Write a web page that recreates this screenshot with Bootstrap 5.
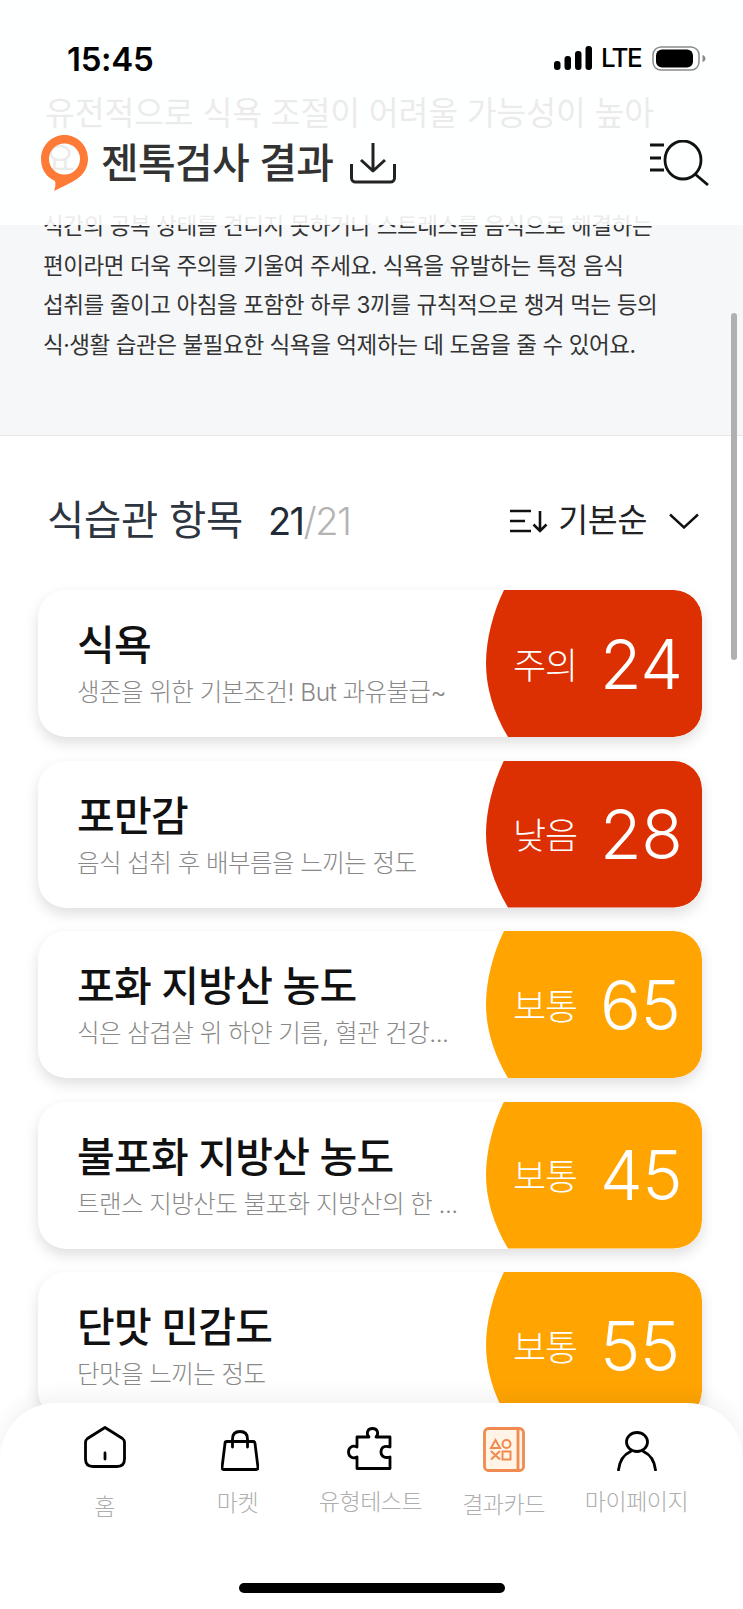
<!DOCTYPE html>
<html lang="ko">
<head>
  <meta charset="UTF-8">
  <title>젠톡검사 결과</title>
  <link href="https://cdn.jsdelivr.net/npm/bootstrap@5.3.3/dist/css/bootstrap.min.css" rel="stylesheet">
  <style>
    html, body { margin: 0; background: #fff; }
    body { font-family: Inter, "Noto Sans CJK KR", sans-serif; }
    .app-screen { width: 743px; height: 1609px; overflow: hidden; position: relative; background: #fff; }

    /* top overlay */
    .top-bar { position: absolute; top: 0; left: 0; right: 0; height: 225px; background: rgba(255,255,255,.9); }
    .status-row { height: 117px; padding: 40px 37px 0 67px; align-items: flex-start; }
    .clock { font-size: 33px; font-weight: 600; color: #000; line-height: 38px; letter-spacing: -.3px; }
    .lte-text { font-size: 26px; line-height: 36px; font-weight: 500; color: #000; margin: 0 11px 0 9px; letter-spacing: -1.6px; }
    .title-row { padding: 18px 34px 0 41px; }
    .title-text { font-size: 41px; font-weight: 500; color: #333; line-height: 48px; margin: 0 17px 0 13px; letter-spacing: -.7px; white-space: nowrap; }

    /* gray summary */
    .summary-box { background: #f6f7f9; height: 436px; padding: 91px 43px 0 45px; border-bottom: 1px solid #e6e7e9; }
    .summary-head { font-size: 32.5px; line-height: 46px; color: #333; margin: 0 0 23px; font-weight: 400; letter-spacing: -.2px; }
    .summary-text { font-size: 22.5px; line-height: 39.6px; color: #333; margin: 0 0 0 -2px; letter-spacing: -.42px; white-space: nowrap; }

    /* list */
    .list-head { padding: 60px 44px 0 47px; height: 154px; align-items: flex-start; }
    .list-title { font-size: 40.5px; line-height: 50px; color: #2c3540; letter-spacing: -.3px; margin: 0; font-weight: 400; }
    .list-count { font-size: 38px; line-height: 50px; margin-left: 25px; color: #222b35; font-weight: 400; letter-spacing: -1.5px; }
    .list-count span { color: #b4b4b4; font-weight: 300; }
    .sort-text { font-size: 32.5px; line-height: 50px; color: #222; margin: 0 22px 0 9px; letter-spacing: -.3px; white-space: nowrap; }

    .score-list { padding: 0 41px 0 38px; gap: 23.5px; }
    .score-item { height: 147px; border-radius: 28px; background: #fff; box-shadow: 0 6px 14px rgba(0,0,0,.13); overflow: hidden; flex: none; }
    .item-body { padding: 29px 0 0 39px; min-width: 0; }
    .item-name { font-size: 41px; font-weight: 500; line-height: 52px; margin: 0; color: #111; letter-spacing: -.7px; white-space: nowrap; }
    .item-desc { font-size: 24.5px; line-height: 32px; margin: 5px 0 0; color: #888; white-space: nowrap; letter-spacing: -.55px; font-weight: 300; }
    .item-score { width: 217px; height: 147px; flex: none; color: #fff; padding-left: 28px; clip-path: path('M19 0 H189 A28 28 0 0 1 217 28 V119 A28 28 0 0 1 189 147 H23 C8 122 1 97 1 73 C1 50 8 22 19 0 Z'); }
    .score-red { background: #dc2f02; }
    .score-amber { background: #ffa400; }
    .score-word { font-size: 36px; letter-spacing: -1px; width: 66px; white-space: nowrap; font-weight: 300; padding-top: 4px; }
    .score-num { font-size: 68px; font-weight: 300; margin-left: 21px; line-height: 1; letter-spacing: -.5px; }

    /* bottom tabs */
    .tab-bar { position: absolute; left: 0; right: 0; bottom: 0; height: 206px; background: #fff; border-radius: 56px 56px 0 0; box-shadow: 0 -8px 20px rgba(0,0,0,.05); padding: 0 38px; }
    .tab-link { width: 133px; text-decoration: none; color: #aeaeae; font-size: 23px; line-height: 34px; letter-spacing: -.5px; white-space: nowrap; font-weight: 300; }
    .tab-link:nth-child(1) svg { margin: 23px 0 22px; }
    .tab-link:nth-child(2) svg { margin: 27px 0 15px 4px; }
    .tab-link:nth-child(3) svg { margin: 24px 3px 15px 0; }
    .tab-link:nth-child(4) svg { margin: 24px 0 16px 1px; }
    .tab-link:nth-child(5) svg { margin: 28px 0 14px; }
    .home-line { position: absolute; left: 239px; top: 180px; width: 266px; height: 10px; background: #000; border-radius: 5px; }
    .scroll-thumb { position: absolute; left: 731px; top: 313px; width: 6px; height: 347px; background: #b0b0b0; border-radius: 3px; }
  </style>
</head>
<body>
<div class="app-screen">

  <div class="summary-box">
    <h2 class="summary-head">유전적으로 식욕 조절이 어려울 가능성이 높아<br>요.</h2>
    <p class="summary-text">식간의 공복 상태를 견디지 못하거나 스트레스를 음식으로 해결하는<br>편이라면 더욱 주의를 기울여 주세요. 식욕을 유발하는 특정 음식<br>섭취를 줄이고 아침을 포함한 하루 3끼를 규칙적으로 챙겨 먹는 등의<br>식·생활 습관은 불필요한 식욕을 억제하는 데 도움을 줄 수 있어요.</p>
  </div>

  <div class="list-head d-flex justify-content-between">
    <div class="d-flex">
      <h3 class="list-title">식습관 항목</h3>
      <div class="list-count">21<span>/21</span></div>
    </div>
    <div class="d-flex align-items-center" style="height:50px">
      <svg width="40" height="26" viewBox="0 0 40 26" fill="none" stroke="#111" stroke-width="2.6"><path d="M1 3h21M1 13h15M1 23h21"/><path d="M31 3v20M24.5 16.5 31 23l6.500-6.500"/></svg>
      <span class="sort-text">기본순</span>
      <svg width="30" height="16" viewBox="0 0 30 16" fill="none" stroke="#111" stroke-width="2.400"><path d="M1 1.500 15 14.500 29 1.500"/></svg>
    </div>
  </div>

  <div class="score-list d-flex flex-column" id="scoreList"></div>

  <!-- 상단 -->
  <div class="top-bar">
    <div class="status-row d-flex justify-content-between">
      <div class="clock">15:45</div>
      <div class="d-flex align-items-center" style="height:36px">
        <svg width="38" height="25" viewBox="0 0 38 25" fill="#000"><rect x="0" y="15" width="6.500" height="9" rx="3"/><rect x="10.500" y="10" width="6.500" height="14" rx="3"/><rect x="21" y="5" width="6.500" height="19" rx="3"/><rect x="31.500" y="0" width="6.500" height="24" rx="3"/></svg>
        <span class="lte-text">LTE</span>
        <svg width="54" height="25" viewBox="0 0 54 25"><rect x="1" y="1" width="46" height="23" rx="8" fill="none" stroke="#8a8a8a" stroke-width="1.500"/><rect x="4" y="3.500" width="37" height="18" rx="6" fill="#000"/><path d="M50.500 9c2 .5 3 2 3 3.500s-1 3-3 3.500z" fill="#8a8a8a"/></svg>
      </div>
    </div>
    <div class="title-row d-flex align-items-center justify-content-between">
      <div class="d-flex align-items-center">
        <svg width="47" height="56" viewBox="0 0 47 56"><path fill-rule="evenodd" d="M23.500 0C36.500 0 47 10.700 47 24c0 9-5 16-11 20-6 4-15 8-23 12 1-3 2-6 1-10C5 42 0 34 0 24 0 10.700 10.500 0 23.500 0ZM23.500 8.500a15.500 15.500 0 1 0 0 31 15.500 15.500 0 0 0 0-31Z" fill="#fd7b36"/></svg>
        <span class="title-text">젠톡검사 결과</span>
        <svg width="46" height="42" viewBox="0 0 46 42" fill="none" stroke="#222" stroke-width="3" stroke-linejoin="round"><path d="M23 1v28M11 18l12 11 12-11"/><path d="M1.500 22v14a4 4 0 0 0 4 4h35a4 4 0 0 0 4-4V22"/></svg>
      </div>
      <svg width="59" height="46" viewBox="0 0 59 46" fill="none" stroke="#111" stroke-width="2.800"><path d="M0 5h14M0 18h11M0 30h14"/><ellipse cx="33" cy="20" rx="18" ry="19"/><path d="M45 34l13 11"/></svg>
    </div>
  </div>

  <div class="scroll-thumb"></div>

  <!-- 하단 탭 -->
  <nav class="tab-bar d-flex align-items-start">
    <a class="tab-link d-flex flex-column align-items-center" href="#">
      <svg width="42" height="42" viewBox="0 0 42 42" fill="none" stroke="#000" stroke-width="2.800" stroke-linejoin="round" stroke-linecap="round"><path d="M21 1.500 3.500 12.500Q1.500 14 1.500 16.500V33Q1.500 40.500 9 40.500H33Q40.500 40.500 40.500 33V16.500Q40.500 14 38.500 12.500Z"/><path d="M21 27v6"/></svg>
      <span>홈</span>
    </a>
    <a class="tab-link d-flex flex-column align-items-center" href="#">
      <svg width="38" height="41" viewBox="0 0 38 41" fill="none" stroke="#000" stroke-width="2.800" stroke-linejoin="round" stroke-linecap="round"><path d="M6 11.500H32Q34 11.500 34 13.500L37 37.500Q37 39.500 35 39.500H3Q1 39.500 1 37.500L4 13.500Q4 11.500 6 11.500Z"/><path d="M11.500 17V9C11.500 4 14.500 1.500 19 1.500S26.500 4 26.500 9V17"/></svg>
      <span>마켓</span>
    </a>
    <a class="tab-link d-flex flex-column align-items-center" href="#">
      <svg width="45" height="43" viewBox="0 0 45 43" fill="none" stroke="#000" stroke-width="2.800" stroke-linejoin="round"><path d="M10 10H22C19 7 20 1.500 25.500 1.500S32 7 29 10H43V20C37 18 34 20.500 34 25S38 31.500 43 30V41.500H10V30C5 32.500 1.500 29 1.500 25S5 17.500 10 20Z"/></svg>
      <span>유형테스트</span>
    </a>
    <a class="tab-link d-flex flex-column align-items-center" href="#">
      <svg width="42" height="45" viewBox="0 0 42 45"><rect x="1.500" y="1.500" width="39" height="42" rx="4" fill="#fff4e6" stroke="#f08a50" stroke-width="2.800"/><path d="M35 2v41" stroke="#f08a50" stroke-width="2.800"/><g fill="none" stroke="#f08a50" stroke-width="2"><path d="M12.500 13l4.500 8H8Z"/><circle cx="23.500" cy="17" r="4"/><path d="M8 24l9 8.500M17 24 8 32.500"/><rect x="19.500" y="24.500" width="8" height="8"/></g></svg>
      <span>결과카드</span>
    </a>
    <a class="tab-link d-flex flex-column align-items-center" href="#">
      <svg width="40" height="40" viewBox="0 0 40 40" fill="none" stroke="#000" stroke-width="2.800" stroke-linecap="round"><ellipse cx="20" cy="11" rx="10.500" ry="9.500"/><path d="M1.500 39C2.500 30 7 23.500 13.500 20.500M38.500 39C37.500 30 33 23.500 26.500 20.500"/></svg>
      <span>마이페이지</span>
    </a>
    <div class="home-line"></div>
  </nav>
</div>

<script src="https://cdn.jsdelivr.net/npm/bootstrap@5.3.3/dist/js/bootstrap.bundle.min.js"></script>
<script>
  const items = [
    {name: '식욕', desc: '생존을 위한 기본조건! But 과유불급~', word: '주의', num: 24, cls: 'score-red'},
    {name: '포만감', desc: '음식 섭취 후 배부름을 느끼는 정도', word: '낮음', num: 28, cls: 'score-red'},
    {name: '포화 지방산 농도', desc: '식은 삼겹살 위 하얀 기름, 혈관 건강...', word: '보통', num: 65, cls: 'score-amber'},
    {name: '불포화 지방산 농도', desc: '트랜스 지방산도 불포화 지방산의 한 ...', word: '보통', num: 45, cls: 'score-amber'},
    {name: '단맛 민감도', desc: '단맛을 느끼는 정도', word: '보통', num: 55, cls: 'score-amber'}
  ];
  const list = document.getElementById('scoreList');
  items.forEach((it) => {
    const row = document.createElement('div');
    row.className = 'score-item d-flex justify-content-between';
    row.innerHTML = `
      <div class="item-body">
        <h4 class="item-name">${it.name}</h4>
        <p class="item-desc">${it.desc}</p>
      </div>
      <div class="item-score d-flex align-items-center ${it.cls}">
        <span class="score-word">${it.word}</span>
        <span class="score-num">${it.num}</span>
      </div>`;
    list.appendChild(row);
  });
</script>
</body>
</html>
